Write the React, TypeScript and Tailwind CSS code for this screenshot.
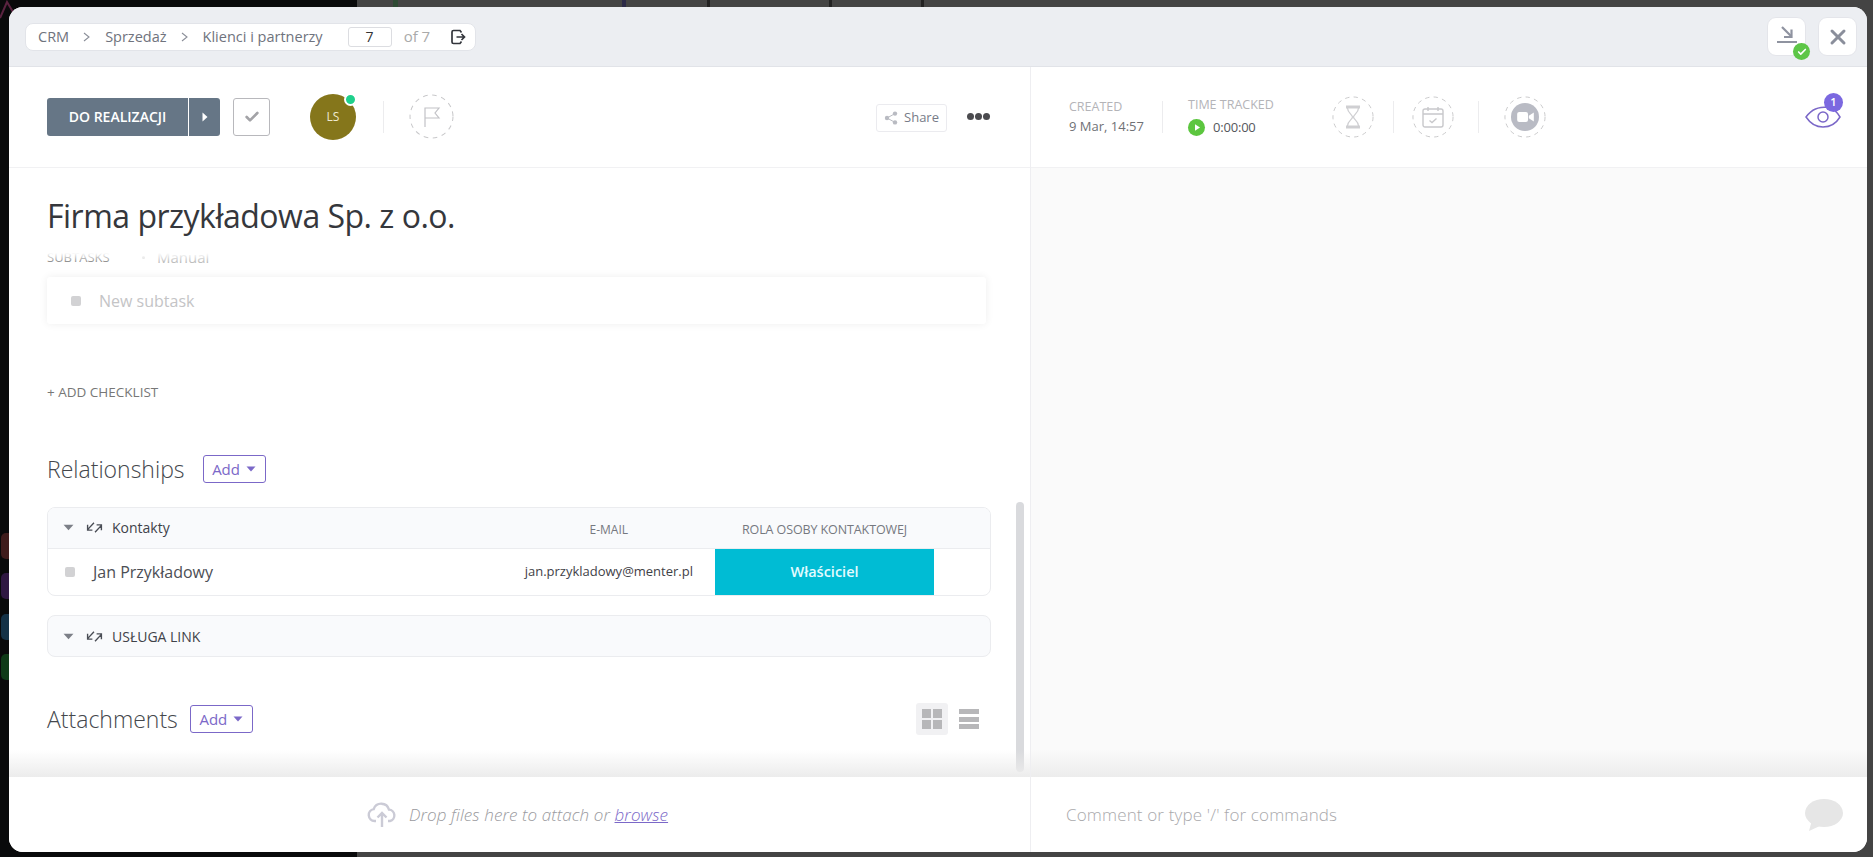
import { Check, X } from "lucide-react";

const FONT = "font-['Open_Sans','Noto_Sans',sans-serif]";

function ChevronSep() {
  return (
    <svg viewBox="0 0 8 10" className="h-[10px] w-2 shrink-0 text-[#8b8f99]" fill="none" stroke="currentColor" strokeWidth="1.1" aria-hidden>
      <path d="M1 1l5 4-5 4" />
    </svg>
  );
}

function Caret({ className }: { className: string }) {
  return (
    <svg viewBox="0 0 10 6" className={className} fill="currentColor" aria-hidden>
      <path d="M0.5 0.5h9L5 5.5z" />
    </svg>
  );
}

function RelIcon() {
  return (
    <svg viewBox="0 0 16 14" className="h-[15px] w-[17px] shrink-0 text-[#4a4d55]" fill="none" stroke="currentColor" strokeWidth="1.3" aria-hidden>
      <path d="M7.5 2.5L1.5 9M1.5 4.5V9.5H6M8.5 11.5L14.5 5M14.5 9.5V4.5H10" />
    </svg>
  );
}

function DashedCircle({ size, children }: { size: string; children: React.ReactNode }) {
  return (
    <div className={`${size} relative flex shrink-0 items-center justify-center`}>
      <svg viewBox="0 0 44 44" className="absolute inset-0 h-full w-full text-[#c8c8ca]" fill="none" stroke="currentColor" aria-hidden>
        <circle cx="22" cy="22" r="21" strokeDasharray="4.5 4.5" />
      </svg>
      {children}
    </div>
  );
}

function SmallDivider() {
  return <div className="h-[32px] w-px shrink-0 bg-[#ececee]" />;
}

function AddButton() {
  return (
    <button className="flex h-[28px] w-[63px] items-center justify-center gap-[6px] rounded-[3px] border border-[#7b68c8] text-[15px] text-[#7b68c8]">
      Add
      <Caret className="h-[6px] w-[10px]" />
    </button>
  );
}

function RelationHeader({ title }: { title: string }) {
  return (
    <div className="flex h-full items-center pl-[15px]">
      <Caret className="h-[7px] w-[11px] text-[#7c7f87]" />
      <div className="ml-[12px]">
        <RelIcon />
      </div>
      <span className="ml-[9px] text-[14px] font-medium text-[#3f4249]">{title}</span>
    </div>
  );
}

function TopBar() {
  return (
    <header className="flex h-[60px] shrink-0 items-center border-b border-[#e1e3e8] bg-[#eceef2] pl-4 pr-[10px]">
      <nav className="flex h-[28px] w-[451px] items-center rounded-[8px] border border-[#e2e4e9] bg-white pl-3 text-[14.5px] font-medium text-[#6f737d]">
        <span>CRM</span>
        <span className="mx-[14px]"><ChevronSep /></span>
        <span>Sprzedaż</span>
        <span className="mx-[14px]"><ChevronSep /></span>
        <span>Klienci i partnerzy</span>
        <span className="ml-[25px] flex h-[20px] w-[44px] items-center justify-center rounded-[3px] border border-[#dcdde1] text-[14px] font-normal text-[#333]">7</span>
        <span className="ml-3 text-[15px] font-normal text-[#aaa]">of 7</span>
        <svg viewBox="0 0 16 16" className="ml-[20px] h-4 w-4 text-[#33363c]" fill="none" stroke="currentColor" strokeWidth="1.7" aria-hidden>
          <path d="M11.5 3.5L10 1.5H3.5A1.5 1.5 0 0 0 2 3v10a1.5 1.5 0 0 0 1.5 1.5H10l1.5-2M6.5 8h8M11.5 5l3 3-3 3" />
        </svg>
      </nav>
      <div className="ml-auto flex items-center gap-3">
        <button className="relative flex h-[39px] w-[39px] items-center justify-center rounded-[9px] border border-[#e4e5ea] bg-white">
          <svg viewBox="0 0 22 20" className="mb-[4px] h-5 w-[22px] text-[#8f93a0]" fill="none" stroke="currentColor" aria-hidden>
            <path d="M6 2l9 9" strokeWidth="2.2" />
            <path d="M15.5 4.5v7.5H8" strokeWidth="2.2" />
            <path d="M1 17h20" strokeWidth="2.2" />
          </svg>
          <span className="absolute left-[25px] top-[25px] flex h-[17px] w-[17px] items-center justify-center rounded-full bg-[#5dc647]">
            <Check className="h-[10px] w-[10px] text-white" strokeWidth={4} />
          </span>
        </button>
        <button className="flex h-[39px] w-[39px] items-center justify-center rounded-[9px] border border-[#e4e5ea] bg-white">
          <X className="h-[24px] w-[24px] text-[#8a8e9b]" strokeWidth={3} />
        </button>
      </div>
    </header>
  );
}

function LeftToolbar() {
  return (
    <div className="flex h-[101px] shrink-0 items-center border-b border-[#f1f1f3] pl-[38px] pr-[40px] pb-[1px]">
      <div className="flex h-[38px] w-[173px] items-center overflow-hidden rounded-[3px] bg-[#667686] text-[14px] font-semibold text-white">
        <span className="flex h-full w-[141px] items-center justify-center">DO REALIZACJI</span>
        <span className="flex h-full flex-1 items-center justify-center border-l border-white">
          <svg viewBox="0 0 6 10" className="h-[10px] w-[6px]" fill="currentColor" aria-hidden>
            <path d="M0.5 0.5L5.5 5l-5 4.5z" />
          </svg>
        </span>
      </div>
      <div className="ml-[13px] flex h-[38px] w-[37px] items-center justify-center rounded-[3px] border border-[#b8b8bc]">
        <Check className="h-4 w-4 text-[#a3a3a7]" strokeWidth={4} />
      </div>
      <div className="relative ml-[40px] flex h-[46px] w-[46px] items-center justify-center rounded-full bg-[#85761b] text-[12px] text-[#f0ead0]">
        LS
        <span className="absolute right-[-1px] top-[-1px] h-[13px] w-[13px] rounded-full border-2 border-white bg-[#1fd08c]" />
      </div>
      <div className="ml-[27px]"><SmallDivider /></div>
      <div className="ml-[25px]">
        <DashedCircle size="h-[45px] w-[45px]">
          <svg viewBox="0 0 18 22" className="h-[22px] w-[18px] text-[#c2c2c6]" fill="none" stroke="currentColor" strokeWidth="1.2" aria-hidden>
            <path d="M2 21V2h14l-4 5 4 5H2" />
          </svg>
        </DashedCircle>
      </div>
      <button className="mt-[2px] ml-auto flex h-[28px] w-[71px] items-center justify-center gap-[6px] rounded-[3px] border border-[#ebebef] text-[13px] text-[#777b88]">
        <svg viewBox="0 0 14 14" className="h-[14px] w-[14px] text-[#b9bbc2]" fill="currentColor" stroke="currentColor" aria-hidden>
          <circle cx="3" cy="7" r="2.2" strokeWidth="0" />
          <circle cx="11" cy="2.6" r="2.2" strokeWidth="0" />
          <circle cx="11" cy="11.4" r="2.2" strokeWidth="0" />
          <path d="M3 7l8-4.4M3 7l8 4.4" strokeWidth="1" />
        </svg>
        Share
      </button>
      <div className="ml-[20px] flex gap-[1px]">
        <span className="h-[7px] w-[7px] rounded-full bg-[#4b4b4f]" />
        <span className="h-[7px] w-[7px] rounded-full bg-[#4b4b4f]" />
        <span className="h-[7px] w-[7px] rounded-full bg-[#4b4b4f]" />
      </div>
    </div>
  );
}

function Relationships() {
  return (
    <section>
      <div className="flex items-center gap-[18px]">
        <h2 className="text-[23px] font-light leading-[30px] text-[#44474c]">Relationships</h2>
        <AddButton />
      </div>
      <div className="mt-[23px] h-[89px] w-[944px] overflow-hidden rounded-[8px] border border-[#ebecef]">
        <div className="flex h-[41px] border-b border-[#ebecef] bg-[#f9fafc]">
          <div className="flex-1 pb-[2px]"><RelationHeader title="Kontakty" /></div>
          <div className="flex w-[143px] items-center justify-end pr-[87px] pt-[4px] text-[12px] font-medium text-[#75787f]">E-MAIL</div>
          <div className="flex w-[219px] items-center justify-center pt-[4px] text-[12.5px] font-medium tracking-[-0.1px] whitespace-nowrap text-[#75787f]">ROLA OSOBY KONTAKTOWEJ</div>
          <div className="w-[56px]" />
        </div>
        <div className="flex h-[46px] items-center">
          <span className="ml-[17px] h-[10px] w-[10px] rounded-[2px] bg-[#d2d2d4]" />
          <span className="ml-[18px] flex-1 text-[16px] text-[#4c4e54]">Jan Przykładowy</span>
          <span className="mr-[22px] text-[13px] text-[#3f4147]">jan.przykladowy@menter.pl</span>
          <div className="flex h-full w-[219px] items-center justify-center bg-[#00bcd4] text-[14.5px] font-semibold text-[#e3fbff]">Właściciel</div>
          <div className="w-[56px]" />
        </div>
      </div>
      <div className="mt-[19px] h-[42px] w-[944px] rounded-[8px] border border-[#ebecef] bg-[#f9fafc]">
        <RelationHeader title="USŁUGA LINK" />
      </div>
    </section>
  );
}

function Attachments() {
  return (
    <section className="mt-[46px] flex w-[944px] items-center">
      <h2 className="text-[23px] font-light leading-[30px] text-[#44474c]">Attachments</h2>
      <div className="ml-[12px]"><AddButton /></div>
      <div className="ml-auto mr-[12px] flex items-center gap-[11px]">
        <div className="grid h-[32px] w-[32px] grid-cols-2 gap-[2px] rounded-[3px] bg-[#f1f1f3] p-[6px]">
          <span className="bg-[#b7b7b9]" />
          <span className="bg-[#b7b7b9]" />
          <span className="bg-[#b7b7b9]" />
          <span className="bg-[#b7b7b9]" />
        </div>
        <div className="flex h-[20px] w-[20px] flex-col justify-between">
          <span className="h-[5px] bg-[#b7b7b9]" />
          <span className="h-[5px] bg-[#b7b7b9]" />
          <span className="h-[5px] bg-[#b7b7b9]" />
        </div>
      </div>
    </section>
  );
}

function LeftPanel() {
  return (
    <div className="relative flex w-[1022px] shrink-0 flex-col border-r border-[#eeeef1] bg-white">
      <LeftToolbar />
      <div className="relative flex-1 overflow-hidden pl-[38px]">
        <h1 className="pt-[23px] text-[32px] leading-[50px] tracking-[-0.5px] text-[#35373c]">Firma przykładowa Sp. z o.o.</h1>
        <div className="relative mt-[9px]">
          <div className="flex h-[15px] items-center text-[15px]">
            <span className="w-[95px] text-[13px] text-[#666]">SUBTASKS</span>
            <span className="mr-[12px] h-[3px] w-[3px] rounded-full bg-[#ccc]" />
            <span className="text-[#aaa]">Manual</span>
          </div>
          <div className="absolute inset-x-0 top-0 h-[15px] bg-gradient-to-b from-white from-20% to-white/0" />
        </div>
        <div className="mt-[12px] flex h-[47px] w-[939px] items-center rounded-[3px] bg-white pl-[24px] shadow-[0_0_8px_rgba(0,0,0,0.07)]">
          <span className="h-[10px] w-[10px] rounded-[2px] bg-[#d2d2d4]" />
          <span className="ml-[18px] text-[16px] text-[#c4c4c6]">New subtask</span>
        </div>
        <div className="mt-[60px] text-[13.5px] leading-[16px] text-[#777]">+ ADD CHECKLIST</div>
        <div className="mt-[54px]">
          <Relationships />
        </div>
        <Attachments />
        {/* scrollbar + bottom fade sit over the scrolling content */}
        <div className="absolute right-[6px] top-[334px] h-[270px] w-2 rounded-[4px] bg-[#d9dadd]" />
        <div className="absolute inset-x-0 bottom-0 h-[27px] bg-gradient-to-b from-white/0 to-[#ececec]" />
      </div>
      <div className="flex h-[75px] shrink-0 items-center justify-center gap-[12px] pr-[4px] text-[17px] font-light italic tracking-[0.1px] text-[#9a9a9e]">
        <svg viewBox="0 0 30 26" className="h-[26px] w-[30px] text-[#cbcbd6]" fill="none" stroke="currentColor" strokeWidth="2.4" aria-hidden>
          <path d="M9 19H7.5a6 6 0 0 1-.8-11.9A8 8 0 0 1 22 7.6 5.8 5.8 0 0 1 23 19h-2" />
          <path d="M15 25V11M10.5 15.5L15 11l4.5 4.5" />
        </svg>
        <span>
          Drop files here to attach or <a className="text-[#7b68c8] underline">browse</a>
        </span>
      </div>
    </div>
  );
}

function RightToolbar() {
  return (
    <div className="flex h-[101px] shrink-0 items-center border-b border-[#f1f1f3] bg-white pl-[38px] pr-[26px] pb-[1px]">
      <div className="w-[93px]">
        <div className="pt-[1px] text-[12.5px] leading-[16px] text-[#b4b4b8]">CREATED</div>
        <div className="mt-[2px] text-[13px] leading-[18px] text-[#6f7176]">9 Mar, 14:57</div>
      </div>
      <SmallDivider />
      <div className="ml-[25px] w-[144px]">
        <div className="mb-[5px] text-[12.5px] leading-[16px] text-[#b4b4b8]">TIME TRACKED</div>
        <div className="flex items-center gap-[8px]">
          <span className="flex h-[17px] w-[17px] items-center justify-center rounded-full bg-[#5cc63f]">
            <svg viewBox="0 0 6 8" className="ml-[1px] h-[7px] w-[5px] text-white" fill="currentColor" aria-hidden>
              <path d="M0 0l6 4-6 4z" />
            </svg>
          </span>
          <span className="text-[13px] leading-[18px] tracking-[-0.2px] text-[#55575c]">0:00:00</span>
        </div>
      </div>
      <DashedCircle size="h-[42px] w-[42px]">
        <svg viewBox="0 0 16 24" className="relative h-[24px] w-4 text-[#cfcfd2]" fill="none" stroke="currentColor" aria-hidden>
          <path d="M1 2h14M1 22h14" strokeWidth="3" />
          <path d="M2.5 3c0 5 5 6.5 5 9s-5 4-5 9M13.5 3c0 5-5 6.5-5 9s5 4 5 9" strokeWidth="1.3" />
        </svg>
      </DashedCircle>
      <div className="ml-[19px]"><SmallDivider /></div>
      <div className="ml-[18px]">
        <DashedCircle size="h-[42px] w-[42px]">
          <svg viewBox="0 0 22 22" className="relative h-[22px] w-[22px] text-[#c8c8cb]" fill="none" stroke="currentColor" strokeWidth="1.4" aria-hidden>
            <rect x="1" y="3" width="20" height="18" rx="2" />
            <path d="M1 8h20M6 1v4M16 1v4M7.5 14.5l2.5 2 4.5-4" />
          </svg>
        </DashedCircle>
      </div>
      <div className="ml-[24px]"><SmallDivider /></div>
      <div className="ml-[25px]">
        <DashedCircle size="h-[42px] w-[42px]">
          <span className="relative flex h-[28px] w-[28px] items-center justify-center rounded-full bg-[#b9bbc4]">
            <svg viewBox="0 0 20 12" className="h-[10px] w-[17px] text-white" fill="currentColor" aria-hidden>
              <rect x="0" y="0" width="13" height="12" rx="2.5" />
              <path d="M14 4.5L20 0.5v11l-6-4z" />
            </svg>
          </span>
        </DashedCircle>
      </div>
      <div className="relative ml-auto">
        <svg viewBox="0 0 36 24" className="h-6 w-9 text-[#7b68c8]" fill="none" stroke="currentColor" strokeWidth="1.5" aria-hidden>
          <path d="M1 12C7 4 13 2 23 2c5 1 9 5 12 10-3 5-9 10-17 10S5 18 1 12z" />
          <circle cx="18" cy="12" r="5" />
        </svg>
        <span className="absolute right-[-2px] top-[-12px] flex h-[19px] w-[19px] items-center justify-center rounded-full bg-[#7b68e0] text-[11px] font-semibold text-white">1</span>
      </div>
    </div>
  );
}

function RightPanel() {
  return (
    <div className="flex flex-1 flex-col bg-white">
      <RightToolbar />
      <div className="relative flex-1 bg-[#fafafa]">
        <div className="absolute inset-x-0 bottom-0 h-[27px] bg-gradient-to-b from-[#fafafa] to-[#ececec]" />
      </div>
      <div className="flex h-[75px] shrink-0 items-center justify-between pl-[35px] pr-[24px] text-[17px] tracking-[0.15px] font-light text-[#a9a9ac]">
        <span>Comment or type '/' for commands</span>
        <svg viewBox="0 0 38 32" className="h-[32px] w-[38px] text-[#e6e6e6]" fill="currentColor" aria-hidden>
          <ellipse cx="19" cy="14" rx="19" ry="14" />
          <path d="M7 21L4 32l13-6z" />
        </svg>
      </div>
    </div>
  );
}

export default function App() {
  return (
    <div className={`relative h-[857px] w-full overflow-hidden bg-[#444444] pl-[9px] pt-[7px] ${FONT}`}>
      {/* dimmed app behind the modal */}
      <div className="absolute inset-y-0 left-0 w-[357px] bg-[#090a0b]">
        <svg viewBox="0 0 14 24" className="absolute left-0 top-0 h-6 w-[14px]" fill="none" strokeWidth="2" aria-hidden>
          <path d="M0 18L7 2l6 10" stroke="#5a2340" />
        </svg>
        <span className="absolute left-[1px] top-[533px] h-[26px] w-[14px] rounded-[5px] bg-[#3f1c1c]" />
        <span className="absolute left-[1px] top-[573px] h-[26px] w-[14px] rounded-[5px] bg-[#2f1842]" />
        <span className="absolute left-[1px] top-[614px] h-[26px] w-[14px] rounded-[5px] bg-[#143247]" />
        <span className="absolute left-[1px] top-[654px] h-[26px] w-[14px] rounded-[5px] bg-[#0e3a17]" />
      </div>
      <span className="absolute left-[393px] top-0 h-[7px] w-[5px] bg-[#2e4a34]" />
      <span className="absolute left-[622px] top-0 h-[7px] w-[4px] bg-[#2c2a48]" />
      <span className="absolute left-[707px] top-0 h-[7px] w-[3px] bg-[#222]" />
      <span className="absolute left-[829px] top-0 h-[7px] w-[3px] bg-[#222]" />
      <span className="absolute left-[921px] top-0 h-[7px] w-[3px] bg-[#222]" />
      <div className="relative flex h-[845px] w-[1858px] flex-col overflow-hidden rounded-[14px] bg-white">
        <TopBar />
        <div className="flex min-h-0 flex-1">
          <LeftPanel />
          <RightPanel />
        </div>
      </div>
    </div>
  );
}
